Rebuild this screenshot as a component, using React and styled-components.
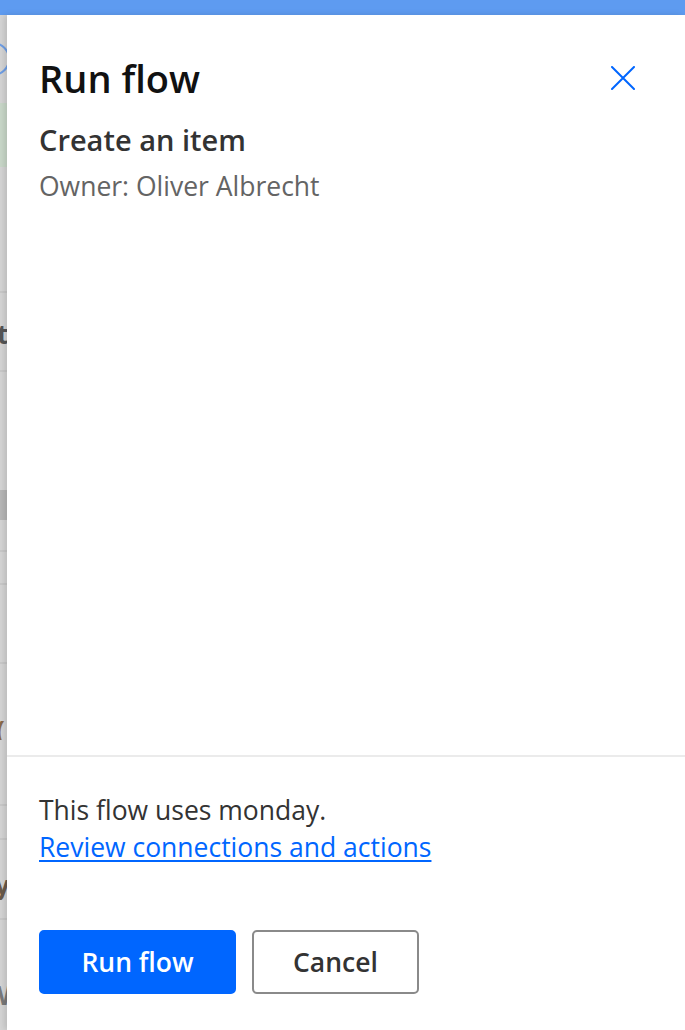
import React from "react";
import styled, { createGlobalStyle } from "styled-components";

const GlobalStyle = createGlobalStyle`
  html, body {
    margin: 0;
    padding: 0;
    background: #d5d5d5;
    overflow: hidden;
  }
  body {
    font-family: "Open Sans", "Noto Sans", "Liberation Sans", sans-serif;
  }
`;

const Page = styled.div`
  display: flex;
  flex-direction: column;
  height: 1030px;
`;

const TopBar = styled.div`
  height: 15px;
  flex: none;
  background: #5e9bf0;
`;

const Body = styled.div`
  display: flex;
  flex: 1;
  min-height: 0;
`;

// the greyed page behind the panel, only a sliver of it shows
const Backdrop = styled.div`
  width: 7px;
  flex: none;
  overflow: hidden;
  display: flex;
  flex-direction: column;
  background: #d5d5d5;
`;

const BackRow = styled.div`
  height: ${p => p.h}px;
  flex: none;
  background: ${p => p.bg || "transparent"};
  border-bottom: ${p => (p.line ? "2px solid #c9c9c9" : "none")};
  display: flex;
  align-items: center;
  overflow: hidden;
`;

const BackGlyph = styled.span`
  font-family: "Open Sans", sans-serif;
  font-weight: 700;
  font-size: 26px;
  line-height: 1;
  color: ${p => p.color || "#555"};
  margin-left: ${p => p.offset || 0}px;
`;

const BackRing = styled.div`
  width: 30px;
  height: 30px;
  margin-left: -24px;
  border: 2px solid #6f9fe6;
  border-radius: 50%;
  flex: none;
`;

const Panel = styled.div`
  flex: 1;
  display: flex;
  flex-direction: column;
  background: #fff;
  box-shadow: -3px 0 6px rgba(0, 0, 0, 0.12);
`;

const Header = styled.div`
  padding: 37px 42px 0 32px;
`;

const TitleRow = styled.div`
  display: flex;
  align-items: center;
  justify-content: space-between;
`;

const Title = styled.h1`
  margin: 0;
  font-size: 38px;
  line-height: 52px;
  font-weight: 600;
  color: #111;
`;

const CloseButton = styled.button`
  width: 40px;
  height: 40px;
  padding: 0;
  border: none;
  background: transparent;
  display: flex;
  align-items: center;
  justify-content: center;
  cursor: pointer;
`;

const Subtitle = styled.h2`
  margin: 16px 0 0;
  font-size: 29px;
  line-height: 40px;
  font-weight: 600;
  color: #333;
`;

const Owner = styled.div`
  margin-top: 9px;
  font-size: 26.5px;
  line-height: 35px;
  color: #646464;
`;

const Spacer = styled.div`
  flex: 1;
`;

const Footer = styled.div`
  border-top: 2px solid #ebebeb;
  padding: 35px 0 36px 32px;
`;

const Notice = styled.p`
  margin: 0;
  font-size: 26.5px;
  line-height: 36.5px;
  color: #333;
`;

const ReviewLink = styled.a`
  display: inline-block;
  font-size: 26.5px;
  line-height: 36.5px;
  color: #0066ff;
  text-decoration: underline;
  text-decoration-thickness: 2px;
  text-underline-offset: 3px;
`;

const Actions = styled.div`
  display: flex;
  gap: 16px;
  margin-top: 65px;
`;

const Button = styled.button`
  height: 64px;
  width: ${p => p.w}px;
  border-radius: 5px;
  font-family: inherit;
  font-size: 26.5px;
  font-weight: 600;
  cursor: pointer;
  border: 2px solid ${p => (p.primary ? "#0066ff" : "#8a8a8a")};
  background: ${p => (p.primary ? "#0066ff" : "#fff")};
  color: ${p => (p.primary ? "#fff" : "#333")};
`;

const backRows = [
  { h: 88, ring: true },
  { h: 64, bg: "#c9d8c9" },
  { h: 124, line: true },
  { h: 26 },
  { h: 30, glyph: "t", offset: -3 },
  { h: 21, line: true },
  { h: 118 },
  { h: 30, bg: "#b7b7b7" },
  { h: 30, line: true },
  { h: 31, line: true },
  { h: 77, line: true },
  { h: 56 },
  { h: 20, glyph: "(", color: "#8a6a4a", offset: -4 },
  { h: 64, line: true },
  { h: 32, line: true },
  { h: 30 },
  { h: 30, glyph: "y", color: "#6a5a4a", offset: -5 },
  { h: 18, line: true },
  { h: 60 },
  { h: 30, glyph: "W", color: "#7a7a7a", offset: -14 },
];

const CloseIcon = () => (
  <svg width="24" height="24" viewBox="0 0 24 24" fill="none">
    <path
      d="M1 1 L23 23 M23 1 L1 23"
      stroke="#0066ff"
      strokeWidth="2"
      strokeLinecap="round"
    />
  </svg>
);

export default function App() {
  return (
    <>
      <GlobalStyle />
      <Page>
        <TopBar />
        <Body>
          <Backdrop>
            {backRows.map((r, i) => (
              <BackRow key={i} h={r.h} bg={r.bg} line={r.line}>
                {r.ring && <BackRing />}
                {r.glyph && (
                  <BackGlyph color={r.color} offset={r.offset}>
                    {r.glyph}
                  </BackGlyph>
                )}
              </BackRow>
            ))}
          </Backdrop>
          <Panel>
            <Header>
              <TitleRow>
                <Title>Run flow</Title>
                <CloseButton aria-label="Close">
                  <CloseIcon />
                </CloseButton>
              </TitleRow>
              <Subtitle>Create an item</Subtitle>
              <Owner>Owner: Oliver Albrecht</Owner>
            </Header>
            <Spacer />
            <Footer>
              <Notice>This flow uses monday.</Notice>
              <ReviewLink href="#">Review connections and actions</ReviewLink>
              <Actions>
                <Button primary w={197}>
                  Run flow
                </Button>
                <Button w={167}>Cancel</Button>
              </Actions>
            </Footer>
          </Panel>
        </Body>
      </Page>
    </>
  );
}
